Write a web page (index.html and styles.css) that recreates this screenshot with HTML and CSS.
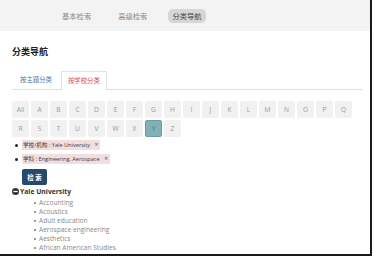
FILE: index.html
```html
<!DOCTYPE html>
<html lang="zh">
<head>
    <meta charset="UTF-8">
    <meta name="viewport" content="width=device-width, initial-scale=1.0">
    <title>分类导航</title>
    <link rel="stylesheet" href="styles.css">
</head>
<body>
<div class="page">
    <div class="topnav">
        <a class="nav-item">基本检索</a>
        <a class="nav-item">高级检索</a>
        <a class="nav-item active">分类导航</a>
    </div>

    <div class="content">
        <h2 class="title">分类导航</h2>

        <ul class="tabs">
            <li class="tab">按主题分类</li>
            <li class="tab active">按学校分类</li>
        </ul>

        <div class="letters">
            <span class="letter">All</span>
            <span class="letter">A</span>
            <span class="letter">B</span>
            <span class="letter">C</span>
            <span class="letter">D</span>
            <span class="letter">E</span>
            <span class="letter">F</span>
            <span class="letter">G</span>
            <span class="letter">H</span>
            <span class="letter">I</span>
            <span class="letter">J</span>
            <span class="letter">K</span>
            <span class="letter">L</span>
            <span class="letter">M</span>
            <span class="letter">N</span>
            <span class="letter">O</span>
            <span class="letter">P</span>
            <span class="letter">Q</span>
            <span class="letter">R</span>
            <span class="letter">S</span>
            <span class="letter">T</span>
            <span class="letter">U</span>
            <span class="letter">V</span>
            <span class="letter">W</span>
            <span class="letter">X</span>
            <span class="letter active">Y</span>
            <span class="letter">Z</span>
        </div>

        <ul class="filters">
            <li><span class="tag">学校/机构 : Yale University <span class="remove">×</span></span></li>
            <li><span class="tag">学科 : Engineering, Aerospace <span class="remove">×</span></span></li>
        </ul>

        <button class="search-btn">检 索</button>

        <div class="tree">
            <div class="node">
                <svg class="node-icon" viewBox="0 0 10 10" width="7" height="7">
                    <circle cx="5" cy="5" r="5" fill="#333"/>
                    <rect x="2" y="4.1" width="6" height="1.8" fill="#fff"/>
                </svg>
                Yale University
            </div>
            <ul class="subjects">
                <li>Accounting</li>
                <li>Acoustics</li>
                <li>Adult education</li>
                <li>Aerospace engineering</li>
                <li>Aesthetics</li>
                <li>African American Studies</li>
            </ul>
        </div>
    </div>
</div>
</body>
</html>
```

FILE: styles.css
```css
body { margin: 0; background: #fff; font-family: "Open Sans", "Noto Sans CJK SC", sans-serif; color: #333; }
.page { width: 370px; height: 254px; border-right: 2px solid #1a1a1a; border-bottom: 2px solid #1a1a1a; overflow: hidden; background: #fff; }

/* top navigation */
.topnav { height: 31px; background: #f3f3f3; display: flex; align-items: center; padding-left: 62px; }
.nav-item { font-size: 7.3px; color: #8a8a8a; margin-right: 27px; }
.nav-item.active { background: #d6d6d6; color: #444; border-radius: 5px; padding: 2px 4px; margin-left: -6px; }

.content { padding: 0 7px 0 12px; }
.title { font-size: 9px; line-height: 12px; font-weight: bold; color: #222; margin: 15px 0 13px; }

/* tabs */
.tabs { list-style: none; margin: 0; padding: 0 0 0 7px; display: flex; border-bottom: 1px solid #e2e2e2; height: 18px; }
.tab { font-size: 6.4px; color: #4a78b0; padding: 0 8px 0 1px; line-height: 18px; margin-right: 1px; }
.tab.active { color: #e0505a; background: #fff; border: 1px solid #e2e2e2; border-bottom-color: #fff; padding: 0 6px; height: 18px; line-height: 18px; }

/* letter index */
.letters { display: flex; flex-wrap: wrap; gap: 2px; margin-top: 11px; }
.letter { width: 17px; height: 17px; background: #f1f1f1; border-radius: 2px; color: #999; font-size: 6.6px; display: flex; align-items: center; justify-content: center; box-sizing: border-box; }
.letter.active { background: #7fb1b7; border: 1px solid #6a9ca3; color: #3f7078; }

/* selected filters */
.filters { list-style: none; margin: 1px 0 0; padding: 0; }
.filters li { position: relative; padding-left: 10px; height: 14px; display: flex; align-items: center; }
.filters li::before { content: ""; position: absolute; left: 3px; top: 5.5px; width: 3px; height: 3px; border-radius: 50%; background: #222; }
.tag { background: #f2dede; font-size: 5.6px; line-height: 9px; padding: 0 2px 0 1px; color: #3a3a3a; }
.remove { color: #555; margin-left: 3px; font-size: 6.5px; }

.search-btn { margin: 3px 0 0 10px; height: 16px; width: 25px; padding: 0; border: none; border-radius: 2px; background: #26496e; color: #fff; font-size: 6.5px; font-weight: bold; font-family: "Noto Sans CJK SC", sans-serif; display: block; }

/* tree */
.tree { margin-top: 1px; }
.node { display: flex; align-items: center; gap: 1px; font-size: 6.8px; font-weight: bold; color: #333; height: 11px; }
.node-icon { display: block; }
.subjects { list-style: none; margin: 1px 0 0; padding: 0 0 0 27px; }
.subjects li { position: relative; font-size: 6.6px; line-height: 9px; color: #8a8a8a; }
.subjects li::before { content: ""; position: absolute; left: -5px; top: 3.5px; width: 2px; height: 2px; border-radius: 50%; background: #777; }
```
